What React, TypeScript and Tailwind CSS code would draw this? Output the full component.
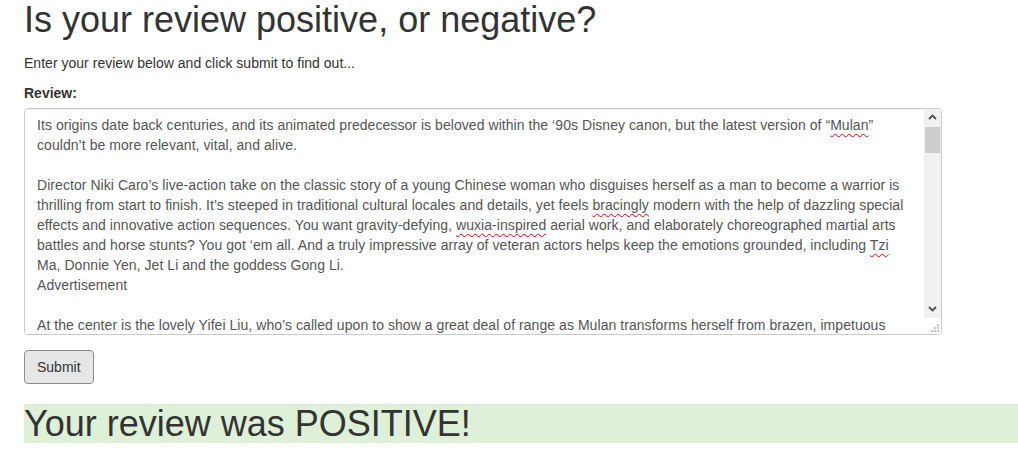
import React from 'react';

const Squiggle = ({ children }: { children: React.ReactNode }) => (
    <span className="underline decoration-wavy decoration-[#e00] decoration-1 underline-offset-[3px]">{children}</span>
);

function Chevron({ up }: { up?: boolean }) {
    return (
        <svg width="9" height="6" viewBox="0 0 9 6" className="block">
            <polyline
                points={up ? '1,5 4.5,1.5 8,5' : '1,1 4.5,4.5 8,1'}
                fill="none"
                stroke="#505050"
                strokeWidth="1.8"
            />
        </svg>
    );
}

function FakeScrollbar() {
    return (
        <div className="flex w-[17px] flex-col bg-[#f1f1f1]">
            <div className="flex h-[17px] items-center justify-center">
                <Chevron up />
            </div>
            <div className="flex-1 px-[1px]">
                <div className="mt-[1px] h-[26px] bg-[#cdcdcd]" />
            </div>
            <div className="flex h-[17px] items-center justify-center">
                <Chevron />
            </div>
            <div className="flex h-[16px] items-end justify-end bg-white pb-[2px] pr-[2px]">
                <svg width="8" height="8" viewBox="0 0 8 8">
                    <rect x="6" y="0" width="2" height="2" fill="#c4c4c4" />
                    <rect x="3" y="3" width="2" height="2" fill="#c4c4c4" />
                    <rect x="6" y="3" width="2" height="2" fill="#c4c4c4" />
                    <rect x="0" y="6" width="2" height="2" fill="#c4c4c4" />
                    <rect x="3" y="6" width="2" height="2" fill="#c4c4c4" />
                    <rect x="6" y="6" width="2" height="2" fill="#c4c4c4" />
                </svg>
            </div>
        </div>
    );
}

export default function App() {
    return (
        <div className="min-h-screen bg-white pl-6 font-['Liberation_Sans',Arial,sans-serif] text-[14px] leading-[20px] text-[#333]">
            <h1 className="mb-[13px] text-[36px] leading-[1.1] font-normal">
                Is your review positive, or negative?
            </h1>
            <p className="mb-[10px] tracking-[0.02px]">Enter your review below and click submit to find out...</p>
            <label className="mb-[5px] block font-bold">Review:</label>

            <div className="flex h-[227px] w-[918px] overflow-hidden rounded-[4px] border border-[#ccc] bg-white shadow-[inset_0_1px_1px_rgba(0,0,0,0.075)]">
                <div className="flex-1 overflow-hidden pl-3 pr-3 pt-[6px] tracking-[0.055px] text-[#555]">
                    <p>
                        Its origins date back centuries, and its animated predecessor is beloved within the ‘90s Disney canon, but the latest version of “<Squiggle>Mulan</Squiggle>” couldn’t be more relevant, vital, and alive.
                    </p>
                    <p className="h-5" />
                    <p>
                        Director Niki Caro’s live-action take on the classic story of a young Chinese woman who disguises herself as a man to become a warrior is thrilling from start to finish. It’s steeped in traditional cultural locales and details, yet feels <Squiggle>bracingly</Squiggle> modern with the help of dazzling special effects and innovative action sequences. You want gravity-defying, <Squiggle>wuxia-inspired</Squiggle> aerial work, and elaborately choreographed martial arts battles and horse stunts? You got ‘em all. And a truly impressive array of veteran actors helps keep the emotions grounded, including <Squiggle>Tzi</Squiggle> Ma, Donnie Yen, Jet Li and the goddess Gong Li.
                    </p>
                    <p>Advertisement</p>
                    <p className="h-5" />
                    <p>
                        At the center is the lovely Yifei Liu, who’s called upon to show a great deal of range as Mulan transforms herself from brazen, impetuous teenager to fearless warrior and leader.
                    </p>
                </div>
                <FakeScrollbar />
            </div>

            <button className="mt-[15px] h-[34px] rounded-[4px] border border-[#8c8c8c] bg-[#e6e6e6] px-3 text-[14px] text-[#333]">
                Submit
            </button>

            <h1 className="mt-5 bg-[#dff0d8] text-[36px] leading-[1.1] font-normal text-[#333]">
                Your review was POSITIVE!
            </h1>
        </div>
    );
}
